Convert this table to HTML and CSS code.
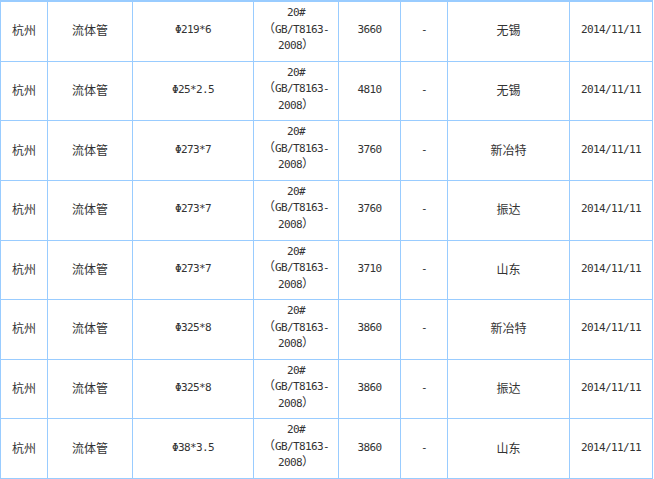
FILE: index.html
```html
<!DOCTYPE html>
<html lang="zh">
<head>
<meta charset="utf-8">
<title>流体管价格</title>
<link rel="stylesheet" href="styles.css">
</head>
<body>
<div class="sheet">
  <div class="c cn">杭州</div><div class="c cn">流体管</div><div class="c num">Φ219*6</div><div class="c num std"><p class="in">20#<br><span class="fw">（</span>GB/T8163-<br>2008<span class="fw">）</span></p></div><div class="c num">3660</div><div class="c num">-</div><div class="c cn">无锡</div><div class="c num">2014/11/11</div>
  <div class="c cn">杭州</div><div class="c cn">流体管</div><div class="c num">Φ25*2.5</div><div class="c num std"><p class="in">20#<br><span class="fw">（</span>GB/T8163-<br>2008<span class="fw">）</span></p></div><div class="c num">4810</div><div class="c num">-</div><div class="c cn">无锡</div><div class="c num">2014/11/11</div>
  <div class="c cn">杭州</div><div class="c cn">流体管</div><div class="c num">Φ273*7</div><div class="c num std"><p class="in">20#<br><span class="fw">（</span>GB/T8163-<br>2008<span class="fw">）</span></p></div><div class="c num">3760</div><div class="c num">-</div><div class="c cn">新冶特</div><div class="c num">2014/11/11</div>
  <div class="c cn">杭州</div><div class="c cn">流体管</div><div class="c num">Φ273*7</div><div class="c num std"><p class="in">20#<br><span class="fw">（</span>GB/T8163-<br>2008<span class="fw">）</span></p></div><div class="c num">3760</div><div class="c num">-</div><div class="c cn">振达</div><div class="c num">2014/11/11</div>
  <div class="c cn">杭州</div><div class="c cn">流体管</div><div class="c num">Φ273*7</div><div class="c num std"><p class="in">20#<br><span class="fw">（</span>GB/T8163-<br>2008<span class="fw">）</span></p></div><div class="c num">3710</div><div class="c num">-</div><div class="c cn">山东</div><div class="c num">2014/11/11</div>
  <div class="c cn">杭州</div><div class="c cn">流体管</div><div class="c num">Φ325*8</div><div class="c num std"><p class="in">20#<br><span class="fw">（</span>GB/T8163-<br>2008<span class="fw">）</span></p></div><div class="c num">3860</div><div class="c num">-</div><div class="c cn">新冶特</div><div class="c num">2014/11/11</div>
  <div class="c cn">杭州</div><div class="c cn">流体管</div><div class="c num">Φ325*8</div><div class="c num std"><p class="in">20#<br><span class="fw">（</span>GB/T8163-<br>2008<span class="fw">）</span></p></div><div class="c num">3860</div><div class="c num">-</div><div class="c cn">振达</div><div class="c num">2014/11/11</div>
  <div class="c cn">杭州</div><div class="c cn">流体管</div><div class="c num">Φ38*3.5</div><div class="c num std"><p class="in">20#<br><span class="fw">（</span>GB/T8163-<br>2008<span class="fw">）</span></p></div><div class="c num">3860</div><div class="c num">-</div><div class="c cn">山东</div><div class="c num">2014/11/11</div>
</div>
</body>
</html>
```
FILE: styles.css
```css
html, body {
  margin: 0;
  padding: 0;
  background: #fff;
}
.sheet {
  display: grid;
  grid-template-columns: 46px 84px 120px 84px 61px 46px 121px 82px;
  grid-template-rows: repeat(8, 1fr);
  gap: 1px;
  padding: 2px 1px 1px 1px;
  width: 653px;
  height: 479px;
  box-sizing: border-box;
  background: #99ccff;
}
.c {
  background: #fff;
  color: #333;
  display: flex;
  align-items: center;
  justify-content: center;
  text-align: center;
  padding-bottom: 3px;
  box-sizing: border-box;
}
.cn {
  font-family: "Noto Sans CJK SC", "Noto Sans", sans-serif;
  font-size: 12px;
}
.num {
  font-family: "DejaVu Sans Mono", "Noto Sans CJK SC", monospace;
  font-size: 11px;
  letter-spacing: -0.6px;
}
.std {
  line-height: 14.5px;
}
.in {
  margin: 0;
  text-spacing-trim: space-all;
}
.fw {
  font-family: "Noto Sans CJK SC", sans-serif;
  font-size: 12px;
  line-height: 14.5px;
  letter-spacing: 0;
}
```
